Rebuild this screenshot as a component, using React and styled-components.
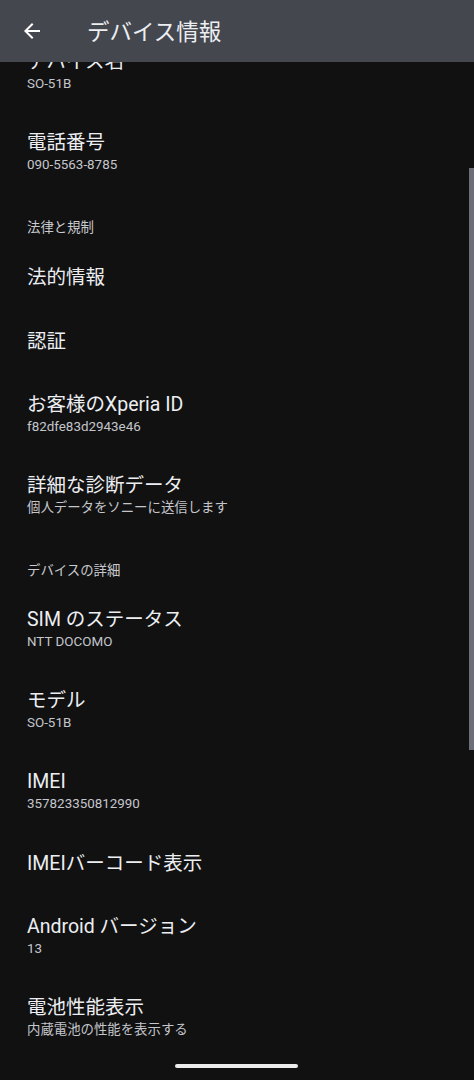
import React from "react";
import styled, { createGlobalStyle } from "styled-components";

const GlobalStyle = createGlobalStyle`
  html, body {
    margin: 0;
    padding: 0;
    background: #111111;
  }
  body {
    font-family: Roboto, "Noto Sans CJK JP", sans-serif;
  }
`;

const sections = [
  {
    items: [
      { title: "デバイス名", sub: "SO-51B" },
      { title: "電話番号", sub: "090-5563-8785" },
    ],
  },
  {
    label: "法律と規制",
    items: [
      { title: "法的情報" },
      { title: "認証" },
      { title: "お客様のXperia ID", sub: "f82dfe83d2943e46" },
      { title: "詳細な診断データ", sub: "個人データをソニーに送信します" },
    ],
  },
  {
    label: "デバイスの詳細",
    items: [
      { title: "SIM のステータス", sub: "NTT DOCOMO" },
      { title: "モデル", sub: "SO-51B" },
      { title: "IMEI", sub: "357823350812990" },
      { title: "IMEIバーコード表示" },
      { title: "Android バージョン", sub: "13" },
      { title: "電池性能表示", sub: "内蔵電池の性能を表示する" },
    ],
  },
];

const App = () => {
  return (
    <Screen>
      <GlobalStyle />
      <Header>
        <BackButton>
          <svg width="24" height="24" viewBox="0 0 24 24">
            <path
              d="M20 11H7.83l5.59-5.59L12 4l-8 8 8 8 1.41-1.41L7.83 13H20v-2z"
              fill="#ffffff"
            />
          </svg>
        </BackButton>
        <HeaderTitle>デバイス情報</HeaderTitle>
      </Header>

      <List>
        {sections.map((section, i) => (
          <div key={i}>
            {section.label && <SectionLabel>{section.label}</SectionLabel>}
            {section.items.map((item) => (
              <Row key={item.title} $twoLine={!!item.sub}>
                <Title>{item.title}</Title>
                {item.sub && <Sub>{item.sub}</Sub>}
              </Row>
            ))}
          </div>
        ))}
      </List>

      <ScrollBar />
      <HomeBar />
    </Screen>
  );
};

const Screen = styled.div`
  position: relative;
  width: 474px;
  height: 1080px;
  overflow: hidden;
  background: #111111;
`;

const Header = styled.div`
  position: absolute;
  top: 0;
  left: 0;
  right: 0;
  height: 62px;
  background: #44474e;
  display: flex;
  align-items: center;
  z-index: 2;
`;

const BackButton = styled.div`
  width: 24px;
  height: 24px;
  margin: 0 0 0 20px;
  display: flex;
`;

const HeaderTitle = styled.div`
  margin-left: 43px;
  font-family: Roboto, "Noto Sans CJK JP", sans-serif;
  font-size: 22.5px;
  color: #eceef2;
  margin-top: -2px;
`;

const List = styled.div`
  padding-top: 31px;
`;

const SectionLabel = styled.div`
  height: 53px;
  box-sizing: border-box;
  padding: 26px 27px 0;
  font-size: 13.4px;
  line-height: 18px;
  color: #c8cad0;
`;

const Row = styled.div`
  height: ${(p) => (p.$twoLine ? "81px" : "64px")};
  box-sizing: border-box;
  padding: 0 27px;
  display: flex;
  flex-direction: column;
  justify-content: center;
`;

const Title = styled.div`
  font-size: 19.5px;
  line-height: 24px;
  color: #eceef2;
`;

const Sub = styled.div`
  font-size: 13.4px;
  line-height: 20px;
  color: #c4c6cc;
`;

const ScrollBar = styled.div`
  position: absolute;
  right: 0;
  top: 168px;
  width: 5px;
  height: 582px;
  background: #6c6f77;
`;

const HomeBar = styled.div`
  position: absolute;
  left: 175px;
  top: 1064px;
  width: 123px;
  height: 4px;
  border-radius: 2px;
  background: #ececec;
`;

export default App;
